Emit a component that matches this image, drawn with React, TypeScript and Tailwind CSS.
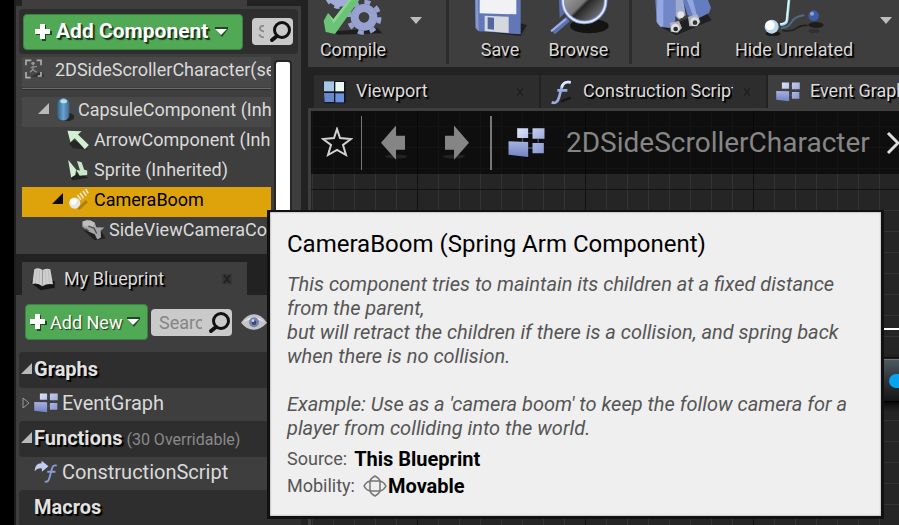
import type { ReactNode } from "react";

const shadow = "[text-shadow:1px_1px_0_#000,2px_2px_1px_#000]";

function Caret({ className = "" }: { className?: string }) {
  return (
    <svg viewBox="0 0 12 8" className={`h-2 w-3 shrink-0 ${className}`} aria-hidden="true">
      <path d="M0 1H12L6 8Z" fill="currentColor" />
    </svg>
  );
}

function GreenCaret() {
  return (
    <svg viewBox="0 0 13 10" className="h-[10px] w-[13px] shrink-0" aria-hidden="true">
      <path d="M0 1H13" stroke="#1d4a20" strokeWidth="2" />
      <path d="M0 2H13L7 10Z" fill="#1d4a20" />
      <path d="M0 2H12L6 8Z" fill="#fff" />
    </svg>
  );
}

function Plus() {
  return (
    <svg viewBox="0 0 18 18" className="size-[18px] shrink-0" aria-hidden="true">
      <path d="M8 2H12V8H18V12H12V18H8V12H2V8H8Z" fill="#1c4a1e" />
      <path d="M6 1H11V6H16V11H11V16H6V11H1V6H6Z" fill="#fff" />
    </svg>
  );
}

function Magnifier() {
  return (
    <svg viewBox="0 0 24 24" className="size-6 shrink-0" fill="none" aria-hidden="true">
      <circle cx="14" cy="10" r="7.5" stroke="#111" strokeWidth="3" />
      <path d="M9 16L4 20" stroke="#111" strokeWidth="4" strokeLinecap="round" />
    </svg>
  );
}

function CloseX() {
  return (
    <button aria-label="Close tab" className="grid size-3 shrink-0 place-items-center">
      <svg viewBox="0 0 12 12" className="size-3" aria-hidden="true">
        <path d="M1 1H11V11H1Z" fill="#303030" opacity="0.6" />
        <path d="M3 2L9 10M9 2L3 10" stroke="#1f1f1f" strokeWidth="1.5" />
      </svg>
    </button>
  );
}

function Expander({ dark = false }: { dark?: boolean }) {
  return (
    <svg viewBox="0 0 12 12" className="size-3 shrink-0" aria-hidden="true">
      <path d="M11 0V11H0Z" fill={dark ? "#0b0b0b" : "#b9b9b9"} />
    </svg>
  );
}

function GraphIcon({ className }: { className: string }) {
  return (
    <svg viewBox="0 0 110 90" className={className} aria-hidden="true">
      <defs>
        <linearGradient id="graphBlue" x1="0" y1="0" x2="1" y2="1">
          <stop offset="0" stopColor="#dde3fa" />
          <stop offset="1" stopColor="#8795cf" />
        </linearGradient>
        <linearGradient id="graphBlueDeep" x1="0" y1="0" x2="0" y2="1">
          <stop offset="0" stopColor="#a7b2e0" />
          <stop offset="1" stopColor="#7182c4" />
        </linearGradient>
      </defs>
      <path d="M60 16H75M90 32V44M60 60H75M43 30V44" stroke="#46506c" strokeWidth="4" />
      <path d="M27 1H60V30H27ZM73 1H109V32H73ZM73 45H107V76H73Z" fill="url(#graphBlue)" />
      <path d="M1 40L60 42V87L1 80Z" fill="url(#graphBlueDeep)" />
    </svg>
  );
}

function CharacterIcon() {
  return (
    <svg viewBox="72 176 60 66" className="h-[22px] w-5 shrink-0" fill="none" aria-hidden="true">
      <path d="M92 232L136 232L122 218Z" fill="#222" opacity=".7" />
      <path d="M78 198V183H94M110 183H123V198M123 218V230H113M78 218V235H92" stroke="#adadad" strokeWidth="5" />
      <circle cx="99" cy="192" r="5" fill="#999" />
      <path d="M100 199L99 210L90 219M99 211L110 219M92 205L111 201" stroke="#8f8f8f" strokeWidth="4" />
    </svg>
  );
}

function CapsuleIcon() {
  return (
    <svg viewBox="166 290 60 75" className="ml-[2px] h-[25px] w-5 shrink-0" aria-hidden="true">
      <defs>
        <linearGradient id="capsuleFill">
          <stop offset="0" stopColor="#2d6389" />
          <stop offset=".5" stopColor="#6ca3cc" />
          <stop offset="1" stopColor="#3f6798" />
        </linearGradient>
      </defs>
      <ellipse cx="205" cy="350" rx="19" ry="12" fill="#171717" opacity=".7" />
      <rect x="173" y="294" width="36" height="66" rx="16" fill="url(#capsuleFill)" />
      <ellipse cx="192" cy="303" rx="10" ry="6" fill="#b8def0" />
    </svg>
  );
}

function ArrowIcon() {
  return (
    <svg viewBox="199 20 72 70" className="h-[23px] w-6 shrink-0" aria-hidden="true">
      <path d="M208 68L220 82L265 86L258 70L222 58Z" fill="#1c1c1c" opacity=".7" />
      <path d="M203 28L246 30L235 40L268 72L256 85L225 51L212 63Z" fill="#d3efd2" />
    </svg>
  );
}

function SpriteIcon() {
  return (
    <svg viewBox="202 112 72 70" className="h-[23px] w-6 shrink-0" aria-hidden="true">
      <path d="M214 160L220 180L270 172L240 158Z" fill="#1a1a1a" opacity=".8" />
      <path d="M208 117L232 147L230 164L217 171Z" fill="#d3efd2" />
      <path d="M235 121L249 125L257 148L266 150V164L243 166L232 148L244 150Z" fill="#c8e5c7" />
    </svg>
  );
}

function BoomIcon() {
  return (
    <svg viewBox="204 204 72 70" className="h-[23px] w-6 shrink-0" fill="none" aria-hidden="true">
      <path d="M238 268L264 244" stroke="#8a6810" strokeWidth="9" opacity=".6" />
      <path d="M235 225L246 240M243 219L254 235M252 213L262 228M260 207L268 220" stroke="#ede5cf" strokeWidth="5" />
      <circle cx="227" cy="250" r="17" fill="#e4e4e4" />
      <circle cx="223" cy="245" r="10" fill="#fff" />
    </svg>
  );
}

function CameraIcon() {
  return (
    <svg viewBox="244 292 75 68" className="h-[23px] w-[25px] shrink-0" aria-hidden="true">
      <path d="M252 328L285 358L318 352L305 332Z" fill="#191919" opacity=".8" />
      <path d="M248 303L262 297L285 305L290 319L314 320L303 330L304 350L293 356L285 340L268 333L248 318Z" fill="#a5a5a5" />
      <path d="M249 302L272 298L285 306L280 320L251 315Z" fill="#bebebe" />
      <path d="M283 322L291 338M266 316L283 322M258 324L268 332" stroke="#4f4f4f" strokeWidth="4" />
    </svg>
  );
}

function BookIcon() {
  return (
    <svg viewBox="90 48 78 72" className="h-6 w-[26px] shrink-0" aria-hidden="true">
      <path d="M94 96L122 118L164 110V90L96 88Z" fill="#151515" />
      <path d="M103 55Q115 48 128 57Q140 50 151 55L159 100Q142 96 127 106Q113 94 97 99Z" fill="#cfcfcf" />
      <path d="M128 57L127 104" stroke="#969696" strokeWidth="3" />
      <path d="M111 57L106 95M119 57L117 97M137 57L138 98M145 57L149 97" stroke="#b4b4b4" strokeWidth="2" />
    </svg>
  );
}

function EyeIcon() {
  return (
    <svg viewBox="0 0 78 48" className="h-4 w-[26px] shrink-0" aria-hidden="true">
      <path d="M0 26Q18 1 39 1T78 26Q60 46 39 47T0 26Z" fill="#c4c4c8" />
      <path d="M6 24Q38 -4 72 24Q38 8 6 24" fill="#e9e9e9" />
      <circle cx="39" cy="25" r="15" fill="#7385ae" />
      <circle cx="39" cy="26" r="7" fill="#39476e" />
      <circle cx="36" cy="20" r="4" fill="#cdd7ef" />
    </svg>
  );
}

function FunctionMark({ arrow = false }: { arrow?: boolean }) {
  return (
    <svg viewBox={arrow ? "100 225 76 76" : "747 232 72 78"} className={arrow ? "size-6 shrink-0" : "h-[26px] w-6 shrink-0"} fill="none" aria-hidden="true">
      {arrow ? (
        <>
          <path d="M102 261Q103 234 124 235V227L146 245L125 262V252Q111 249 102 261Z" fill="#c3cdf0" />
          <path d="M134 293Q144 298 149 281L157 252Q160 239 172 243M142 262H168" stroke="#8b9cd5" strokeWidth="6" />
        </>
      ) : (
        <>
          <path d="M783 300L812 288" stroke="#161616" strokeWidth="7" />
          <path d="M755 302Q772 309 778 284L785 258Q790 237 812 242M772 266H802" stroke="#9aace4" strokeWidth="8" />
          <path d="M785 258Q790 237 812 242" stroke="#dfe6ff" strokeWidth="8" />
        </>
      )}
    </svg>
  );
}

function ViewportIcon() {
  return (
    <svg viewBox="66 235 72 72" className="size-6 shrink-0" aria-hidden="true">
      <path d="M70 238H137V305H74Z" fill="#12161f" />
      <path d="M72 239H102V269H72Z" fill="#a5c6e5" />
      <path d="M106 241H132V269H106Z" fill="#ecf6f2" />
      <path d="M72 274H102V301H74Z" fill="#6689ce" />
      <path d="M106 275H132V302H106Z" fill="#6a92df" />
    </svg>
  );
}

function CompileIcon() {
  return (
    <svg viewBox="60 0 204 108" className="h-9 w-[68px]" fill="none" aria-hidden="true">
      <path d="M80 96L120 104L250 100L235 84Z" fill="#161616" opacity=".8" />
      <circle cx="122" cy="-18" r="28" stroke="#a3acd8" strokeWidth="20" />
      <circle cx="122" cy="-18" r="40" stroke="#a3acd8" strokeWidth="10" strokeDasharray="16 15.4" />
      <circle cx="195" cy="52" r="28" stroke="#98a2d1" strokeWidth="24" />
      <circle cx="195" cy="52" r="46" stroke="#98a2d1" strokeWidth="13" strokeDasharray="18 18.1" />
      <path d="M74 62L87 39L103 58L148 0H181L108 102L80 96Z" fill="#6cc276" />
      <path d="M87 39L103 58L148 0H157L104 70Z" fill="#8bd792" />
    </svg>
  );
}

function SaveIcon() {
  return (
    <svg viewBox="525 0 165 108" className="h-9 w-[55px]" aria-hidden="true">
      <path d="M548 94L668 108L687 75L665 70Z" fill="#202020" />
      <path d="M532 0H668V103L542 94L533 84Z" fill="#6277b8" />
      <path d="M532 0H540L542 94L533 84Z" fill="#8598d2" />
      <path d="M545 0H655V43L545 40Z" fill="#f1f2f4" />
      <path d="M560 47L632 50V99L560 93Z" fill="#d5d8dd" />
      <path d="M569 52L588 53V89L569 87Z" fill="#5266a2" />
    </svg>
  );
}

function BrowseIcon() {
  return (
    <svg viewBox="744 0 180 108" className="h-9 w-[60px]" fill="none" aria-hidden="true">
      <defs>
        <linearGradient id="lens" x1="0" y1="0" x2="1" y2="1">
          <stop offset="0" stopColor="#bbb" />
          <stop offset=".5" stopColor="#777" />
          <stop offset=".55" stopColor="#252525" />
          <stop offset="1" stopColor="#999" />
        </linearGradient>
      </defs>
      <ellipse cx="865" cy="78" rx="58" ry="22" fill="#141414" />
      <path d="M774 0H790V40L776 54Z" fill="#596ca7" />
      <path d="M801 57L756 96" stroke="#5c72b2" strokeWidth="17" />
      <path d="M795 57L750 94" stroke="#a2b2e5" strokeWidth="6" />
      <circle cx="850" cy="3" r="64" fill="url(#lens)" stroke="#7f93cd" strokeWidth="11" />
      <circle cx="850" cy="3" r="64" stroke="#e7edff" strokeWidth="5" />
    </svg>
  );
}

function FindIcon() {
  return (
    <svg viewBox="162 0 180 108" className="h-9 w-[60px]" aria-hidden="true">
      <path d="M190 84L232 106L338 60L320 35Z" fill="#202020" />
      <path d="M169 0H229V63L212 84L184 80L173 66Z" fill="#7187c8" />
      <path d="M175 0H193V77L184 80L173 66Z" fill="#96a8df" />
      <path d="M252 0H327L336 23L330 39L296 56L266 46Z" fill="#647cc0" />
      <path d="M264 0H282L294 48L282 48Z" fill="#91a5df" />
      <path d="M229 0H253L260 46L240 59L229 48Z" fill="#9dabd4" />
      <circle cx="245" cy="44" r="10" fill="#e2e4e8" />
      <path d="M213 68L240 63L249 84L236 98L215 95Z" fill="#aeb0b5" />
      <path d="M267 50L295 43L304 66L294 79L271 79Z" fill="#b3b5b9" />
      <circle cx="229" cy="84" r="13" fill="#e1e1e1" />
      <circle cx="287" cy="65" r="13" fill="#ddd" />
      <circle cx="230" cy="87" r="7" fill="#252b34" />
      <circle cx="288" cy="68" r="7" fill="#303640" />
    </svg>
  );
}

function HideIcon() {
  return (
    <svg viewBox="486 0 192 108" className="h-9 w-16" fill="none" aria-hidden="true">
      <ellipse cx="519" cy="101" rx="22" ry="8" fill="#1a1a1a" />
      <ellipse cx="648" cy="75" rx="23" ry="9" fill="#1d1d1d" />
      <ellipse cx="642" cy="93" rx="17" ry="6" fill="#303030" />
      <path d="M548 91Q575 96 589 85T622 77" stroke="#202020" strokeWidth="5" />
      <path d="M543 84Q565 83 575 66T613 46" stroke="#50688e" strokeWidth="6" />
      <path d="M567 0L561 60Q560 72 541 74" stroke="#9bd6e5" strokeWidth="8" />
      <path d="M566 0L560 60Q558 71 540 72" stroke="#e4fcff" strokeWidth="4" />
      <circle cx="515" cy="80" r="21" fill="#bed9ee" />
      <circle cx="510" cy="76" r="14" fill="#fff" />
      <circle cx="641" cy="47" r="16" fill="#405ba3" />
      <circle cx="636" cy="41" r="6" fill="#8aa5dd" />
    </svg>
  );
}

function ToolButton({ icon, label, width }: { icon: ReactNode; label: string; width: string }) {
  return (
    <button className={`flex shrink-0 flex-col items-center ${width}`}>
      {icon}
      <span className={`h-7 text-[18px] leading-7 whitespace-nowrap text-[#d9d9d9] ${shadow}`}>{label}</span>
    </button>
  );
}

function ToolDivider() {
  return <div className="mr-[11px] ml-3 h-16 w-[3px] shrink-0 bg-[#2c2c2c]" />;
}

function TreeRow({ icon, label, indent, className = "" }: { icon: ReactNode; label: string; indent: string; className?: string }) {
  return (
    <li className={`flex h-[30px] items-center overflow-hidden text-[18px] whitespace-nowrap ${indent} ${className}`}>
      {icon}
      <span>{label}</span>
    </li>
  );
}

function SectionHeader({ label, note, expander = true }: { label: string; note?: string; expander?: boolean }) {
  return (
    <h2 className={`ml-[3px] flex h-9 items-center rounded-l bg-[#2e2e2e] pb-[2px] pl-[2px] text-[20px] font-bold text-[#e2e2e2] ${shadow}`}>
      <span className="flex w-[13px] shrink-0">{expander && <Expander />}</span>
      {label}
      {note && <span className="mt-1 ml-1 text-[16px] font-normal text-[#8a8a8a] [text-shadow:none]">{note}</span>}
    </h2>
  );
}

function Tab({ icon, label, active = false }: { icon: ReactNode; label: string; active?: boolean }) {
  return (
    <div role="tab" aria-selected={active} className={`flex h-[33px] w-[225px] shrink-0 items-center pr-[13px] pl-2 ${active ? "bg-[#3e3e3e]" : "bg-[#2d2d2d]"}`}>
      {icon}
      <span className={`mr-2 ml-[10px] flex-1 overflow-hidden pb-[2px] text-[18px] whitespace-nowrap text-[#dcdcdc] ${shadow}`}>{label}</span>
      <CloseX />
    </div>
  );
}

function LeftColumn() {
  return (
    <aside className="flex w-[285px] shrink-0 flex-col">
      <div className="h-[6px] shrink-0 pl-[6px]">
        <div className="h-full w-[225px] bg-[#3e3e3e]" />
      </div>
      <section aria-label="Components" className="h-[248px] shrink-0 bg-[#3e3e3e] px-[3px] pt-[3px]">
        <div className="flex h-[45px] items-center justify-between rounded bg-[#2e2e2e] pr-[5px] pl-1">
          <button className="flex h-9 w-[220px] items-center gap-1 rounded-sm border border-[#3b8440] bg-[#51a955] pl-[10px] text-[21px] font-bold whitespace-nowrap text-white [text-shadow:1px_1px_0_#173a19,2px_2px_1px_#173a19]">
            <Plus />
            Add Component
            <span className="pl-[3px]">
              <GreenCaret />
            </span>
          </button>
          <label className="flex h-[27px] w-[41px] items-center justify-end rounded-sm bg-[#cacaca]">
            <input aria-label="Search components" placeholder="Search" className="w-[6px] min-w-0 text-[18px] outline-none placeholder:text-[#858585]" />
            <span className="ml-1 pr-px">
              <Magnifier />
            </span>
          </label>
        </div>
        <div className="flex pt-[3px] pl-[3px]">
          <ul className="w-[249px] text-[#dadada]">
            <TreeRow icon={<CharacterIcon />} label="2DSideScrollerCharacter(self)" indent="gap-[11px] pl-[2px]" className="bg-[#484848] pb-[6px]" />
            <li aria-hidden="true" className="flex h-[10px] items-start pt-px">
              <span className="h-[2px] w-full border-t border-[#6c6c6c] bg-[#2c2c2c]" />
            </li>
            <TreeRow icon={<><Expander /><CapsuleIcon /></>} label="CapsuleComponent (Inherited)" indent="gap-[3px] pl-4" className="bg-[#484848] pb-[6px]" />
            <TreeRow icon={<ArrowIcon />} label="ArrowComponent (Inherited)" indent="gap-1 pl-11" className="pb-[6px]" />
            <TreeRow icon={<SpriteIcon />} label="Sprite (Inherited)" indent="gap-1 pl-11" className="pb-[6px]" />
            <TreeRow icon={<><Expander dark /><BoomIcon /></>} label="CameraBoom" indent="gap-[3px] pl-[30px]" className="bg-[#dea20a] pb-[6px] text-black" />
            <TreeRow icon={<CameraIcon />} label="SideViewCameraComponent" indent="gap-[3px] pl-[59px]" className="pb-[6px]" />
          </ul>
          <div className="mt-[3px] ml-[3px] h-[190px] w-[18px] rounded-sm border-2 border-[#262626] bg-white" />
        </div>
      </section>

      <div className="shrink-0 pt-2 pl-[6px]">
        <div role="tab" aria-selected="true" className="flex h-[33px] w-[225px] items-center bg-[#3e3e3e] pr-[14px] pl-2">
          <BookIcon />
          <span className={`ml-2 flex-1 text-[18px] text-[#dcdcdc] ${shadow}`}>My Blueprint</span>
          <CloseX />
        </div>
      </div>
      <section aria-label="My Blueprint" className="flex-1 bg-[#3e3e3e]">
        <div className="flex h-[57px] items-start pt-[9px] pl-[9px]">
          <button className="flex h-9 w-[123px] shrink-0 items-center gap-[3px] rounded-sm border border-[#3b8440] bg-[#51a955] pl-[3px] text-[18px] whitespace-nowrap text-white [text-shadow:1px_1px_1px_#173a19]">
            <Plus />
            Add New
            <span className="pl-[2px]">
              <GreenCaret />
            </span>
          </button>
          <label className="mt-[5px] ml-[3px] flex h-[27px] w-[81px] shrink-0 items-center rounded-sm bg-[#cacaca] pl-2">
            <input aria-label="Search blueprint" placeholder="Search" className="w-[43px] min-w-0 text-[18px] outline-none placeholder:text-[#858585]" />
            <span className="ml-[5px]">
              <Magnifier />
            </span>
          </label>
          <button aria-label="View options" className="mt-[10px] ml-[9px]">
            <EyeIcon />
          </button>
        </div>
        <SectionHeader label="Graphs" />
        <div className="flex h-[33px] items-center pb-[3px] pl-[6px] text-[20px] text-[#dadada]">
          <svg viewBox="0 0 8 12" className="h-3 w-2 shrink-0" fill="none" aria-hidden="true">
            <path d="M1 1L7 6L1 11Z" stroke="#9a9a9a" />
          </svg>
          <GraphIcon className="mr-1 ml-1 h-5 w-6 shrink-0" />
          EventGraph
        </div>
        <SectionHeader label="Functions" note="(30 Overridable)" />
        <div className="flex h-[33px] items-center gap-1 pb-[3px] pl-[18px] text-[20px] text-[#dadada]">
          <FunctionMark arrow />
          ConstructionScript
        </div>
        <SectionHeader label="Macros" expander={false} />
      </section>
    </aside>
  );
}

function NavArrow({ flip = false }: { flip?: boolean }) {
  return (
    <button aria-label={flip ? "Forward" : "Back"} className="shrink-0">
      <svg viewBox="238 66 84 110" className={`h-[37px] w-7 ${flip ? "-scale-x-100" : ""}`} aria-hidden="true">
        <ellipse cx="286" cy="163" rx="34" ry="6" fill="#222" />
        <path d="M241 122L286 70V101H313V143H286V173Z" fill="#858585" />
      </svg>
    </button>
  );
}

function RightColumn() {
  return (
    <main className="flex min-w-0 flex-1 flex-col overflow-hidden">
      <div role="toolbar" className="flex h-[67px] shrink-0 bg-[#3e3e3e]">
        <ToolButton icon={<CompileIcon />} label="Compile" width="w-[90px]" />
        <button aria-label="Compile options" className="flex h-10 w-9 shrink-0 items-center justify-center text-[#bdbdbd]">
          <Caret />
        </button>
        <ToolDivider />
        <ToolButton icon={<SaveIcon />} label="Save" width="w-20" />
        <ToolButton icon={<BrowseIcon />} label="Browse" width="w-[77px]" />
        <ToolDivider />
        <ToolButton icon={<FindIcon />} label="Find" width="w-20" />
        <ToolButton icon={<HideIcon />} label="Hide Unrelated" width="w-[142px]" />
        <button aria-label="Hide options" className="flex h-10 w-[42px] shrink-0 items-center justify-center text-[#bdbdbd]">
          <Caret />
        </button>
      </div>
      <div role="tablist" className="flex shrink-0 gap-[2px] pt-2 pl-[6px]">
        <Tab icon={<ViewportIcon />} label="Viewport" />
        <Tab icon={<FunctionMark />} label="Construction Script" />
        <Tab icon={<GraphIcon className="h-5 w-6 shrink-0" />} label="Event Graph" active />
      </div>
      <div className="flex-1 border-t-[3px] border-l-[3px] border-[#3e3e3e]">
        <div className="relative h-full overflow-hidden bg-[#252525] bg-[image:linear-gradient(to_right,#121212_1px,transparent_1px),linear-gradient(#121212_1px,transparent_1px),linear-gradient(to_right,#343434_1px,transparent_1px),linear-gradient(#343434_1px,transparent_1px)] bg-[length:168px_168px,168px_168px,21px_21px,21px_21px] bg-[position:106px_78px,106px_78px,1px_15px,1px_15px]">
          <div className="flex h-[63px] items-center bg-black/60 pl-[10px] whitespace-nowrap">
            <button aria-label="Favourite" className="shrink-0">
              <svg viewBox="0 0 32 32" className="size-8" fill="none" aria-hidden="true">
                <path d="M16 2L19 11L30 12L22 18L25 28L16 23L7 28L10 18L2 12L13 11Z" stroke="#d2d2d2" strokeWidth="2" />
              </svg>
            </button>
            <div className="ml-2 h-[54px] w-px shrink-0 bg-[#777]" />
            <div className="ml-[18px] flex shrink-0 gap-[34px]">
              <NavArrow />
              <NavArrow flip />
            </div>
            <div className="ml-5 h-[54px] w-[2px] shrink-0 bg-[#777]" />
            <GraphIcon className="ml-4 h-[30px] w-[37px] shrink-0" />
            <span className="ml-[21px] shrink-0 text-[28px] text-[#868686]">2DSideScrollerCharacter</span>
            <svg viewBox="0 0 16 24" className="ml-4 h-6 w-4 shrink-0" fill="none" aria-hidden="true">
              <path d="M2 2L12 12L2 22" stroke="#ddd" strokeWidth="3" />
            </svg>
          </div>
          <div className="absolute top-[217px] left-[500px] h-[2px] w-full bg-white" />
          <div className="absolute top-[248px] left-[500px] flex h-[43px] w-40 items-center border-y border-t-[#777] border-b-black bg-linear-to-b from-[#4b5960] to-[#151515] pl-[78px] shadow-[0_3px_8px_#000]">
            <span className="h-[14px] w-6 rounded-full bg-[#08a4ef]" />
          </div>
        </div>
      </div>
    </main>
  );
}

function Tooltip() {
  return (
    <div role="tooltip" className="absolute top-[210px] left-[267px] w-[617px] border-[3px] border-t-2 border-[#111] bg-[#efefef] px-[17px] pt-[14px] pb-[17px] text-[18px] whitespace-nowrap text-[#555] inset-shadow-[0_0_2px_#777]">
      <h1 className="text-[24px] leading-9 text-black">CameraBoom (Spring Arm Component)</h1>
      <p className="mt-[10px] text-[20px] leading-6 italic">
        This component tries to maintain its children at a fixed distance
        <br />
        from the parent,
        <br />
        but will retract the children if there is a collision, and spring back
        <br />
        when there is no collision.
        <br />
        <br />
        Example: Use as a 'camera boom' to keep the follow camera for a
        <br />
        player from colliding into the world.
      </p>
      <div className="mt-[5px] flex h-[27px] items-center gap-[7px]">
        Source: <strong className="text-[20px] text-black">This Blueprint</strong>
      </div>
      <div className="flex h-[27px] items-center">
        Mobility:
        <svg viewBox="0 0 24 24" className="ml-2 size-6" fill="none" stroke="#777" aria-hidden="true">
          <path d="M7 7Q8 4 12 2Q16 4 17 7M17 7Q21 8 23 12Q21 16 17 17M17 17Q16 20 12 22Q8 20 7 17M7 17Q3 16 1 12Q3 8 7 7M7 7H17V17H7Z" strokeWidth="1.5" />
        </svg>
        <strong className="ml-px text-[20px] text-black">Movable</strong>
      </div>
    </div>
  );
}

export default function App() {
  return (
    <div className="relative flex h-screen overflow-hidden bg-[#222] font-[Roboto,'Liberation_Sans',sans-serif]">
      <div className="w-[14px] shrink-0 bg-black" />
      <div className="w-[2px] shrink-0 bg-[#1d1d1d]" />
      <LeftColumn />
      <div className="w-[7px] shrink-0 bg-[#222]" />
      <RightColumn />
      <Tooltip />
    </div>
  );
}
